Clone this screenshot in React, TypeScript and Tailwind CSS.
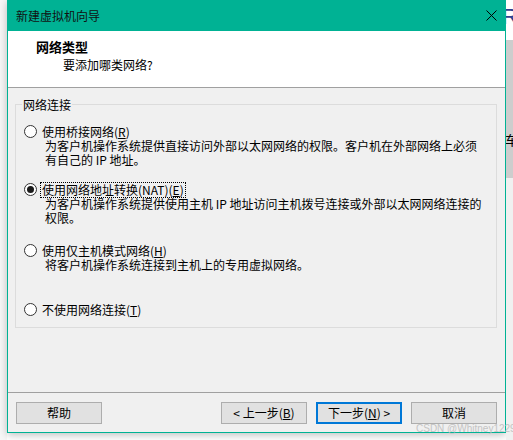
import React from "react";

function Radio({ checked }: { checked?: boolean }) {
  return (
    <span className="w-[13px] h-[13px] shrink-0 rounded-full border border-[#333333] bg-white flex items-center justify-center">
      {checked ? <span className="w-[7px] h-[7px] rounded-full bg-[#1a1a1a]" /> : null}
    </span>
  );
}

function Btn({ children, primary }: { children: React.ReactNode; primary?: boolean }) {
  return (
    <div
      className={`w-[86px] h-[22px] flex items-center justify-center bg-[#e1e1e1] leading-[14px] ${
        primary ? "border-2 border-[#0078d7]" : "border border-[#adadad]"
      }`}
    >
      {children}
    </div>
  );
}

export default function App() {
  return (
    <div className="relative w-[513px] h-[440px] overflow-hidden bg-white flex font-['Noto_Sans_CJK_SC','Microsoft_YaHei',sans-serif] text-[12px] text-black">
      <div className="w-[7px] shrink-0 bg-[#f7f7f7]" />
      <div className="w-[499px] h-[433px] shrink-0 flex flex-col border-x border-b border-[#00b294] bg-[#f0f0f0] shadow-[0_2px_8px_rgba(0,0,0,0.25)]">
        {/* title bar */}
        <div className="h-[31px] shrink-0 bg-[#00b294] flex items-center justify-between pl-[8px] pr-[8px]">
          <span className="leading-[15px] text-[#111]">新建虚拟机向导</span>
          <svg width="11" height="11" viewBox="0 0 11 11">
            <path d="M0.5 0.5 L10.5 10.5 M10.5 0.5 L0.5 10.5" stroke="#000" strokeWidth="1" fill="none" />
          </svg>
        </div>
        {/* header */}
        <div className="h-[57px] shrink-0 bg-white border-b border-[#a0a0a0] pt-[8px]">
          <div className="pl-[28px] text-[13px] font-bold leading-[16px]">网络类型</div>
          <div className="pl-[55px] mt-[2px] leading-[15px]">要添加哪类网络?</div>
        </div>
        {/* body */}
        <div className="h-[304px] shrink-0 pt-[16px]">
          <div className="relative h-[224px] ml-[7px] mr-[8px] border border-[#dcdcdc] pl-[8px] pt-[19px]">
            <span className="absolute left-[6px] top-[-8px] px-[1px] bg-[#f0f0f0] leading-[15px]">网络连接</span>

            <div className="flex items-center h-[15px]">
              <Radio />
              <span className="ml-[3px] px-[1px] border border-transparent leading-[14px]">
                使用桥接网络(<span className="underline">R</span>)
              </span>
            </div>
            <div className="pl-[21px] leading-[14px] whitespace-nowrap">
              为客户机操作系统提供直接访问外部以太网网络的权限。客户机在外部网络上必须
              <br />
              有自己的 IP 地址。
            </div>

            <div className="flex items-center h-[15px] mt-[15px]">
              <Radio checked />
              <span className="ml-[3px] px-[1px] border border-dotted border-black leading-[14px]">
                使用网络地址转换(NAT)(<span className="underline">E</span>)
              </span>
            </div>
            <div className="pl-[21px] leading-[14px] whitespace-nowrap">
              为客户机操作系统提供使用主机 IP 地址访问主机拨号连接或外部以太网网络连接的
              <br />
              权限。
            </div>

            <div className="flex items-center h-[15px] mt-[18px]">
              <Radio />
              <span className="ml-[3px] px-[1px] border border-transparent leading-[14px]">
                使用仅主机模式网络(<span className="underline">H</span>)
              </span>
            </div>
            <div className="pl-[21px] leading-[14px] whitespace-nowrap">将客户机操作系统连接到主机上的专用虚拟网络。</div>

            <div className="flex items-center h-[15px] mt-[30px]">
              <Radio />
              <span className="ml-[3px] px-[1px] border border-transparent leading-[14px]">
                不使用网络连接(<span className="underline">T</span>)
              </span>
            </div>
          </div>
        </div>
        {/* buttons */}
        <div className="h-[40px] shrink-0 border-t border-[#a0a0a0] pt-[9px] pl-[8px] pr-[8px] flex items-start">
          <Btn>帮助</Btn>
          <div className="flex-1" />
          <div className="flex gap-[9px]">
            <Btn>&lt; 上一步(<span className="underline">B</span>)</Btn>
            <Btn primary>
              下一步(<span className="underline">N</span>) &gt;
            </Btn>
            <Btn>取消</Btn>
          </div>
        </div>
      </div>
      {/* right strip (background app) */}
      <div className="w-[7px] shrink-0 flex flex-col overflow-hidden">
        <div className="h-[40px] bg-white overflow-hidden pt-[4px]">
          <span className="block text-[22px] leading-[26px] text-[#2f3f8f] font-['Liberation_Sans',sans-serif] -ml-[4px]">R</span>
        </div>
        <div className="h-[138px] bg-[#cdcdcd] overflow-hidden pt-[92px]">
          <span className="block text-[13px] leading-[15px] -ml-[1px]">车</span>
        </div>
        <div className="flex-1 bg-[#f0f0f0]" />
      </div>
      <span className="absolute left-[416px] top-[423px] text-[10px] leading-[12px] text-[#c4c4c4] font-['Liberation_Sans',sans-serif] whitespace-nowrap">
        CSDN @Whitney1229
      </span>
    </div>
  );
}
